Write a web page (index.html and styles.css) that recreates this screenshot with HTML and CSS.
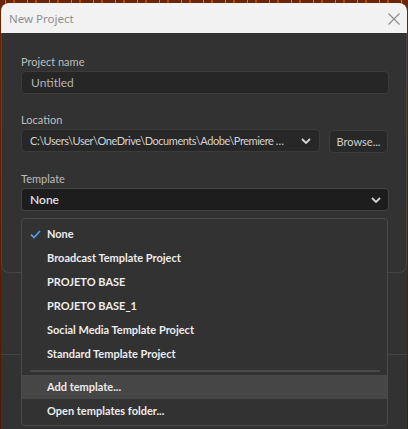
FILE: index.html
```html
<!DOCTYPE html>
<html lang="en">
<head>
<meta charset="utf-8">
<title>New Project</title>
<link rel="stylesheet" href="styles.css">
</head>
<body>
<div class="window">
  <div class="titlebar">
    <span class="title">New Project</span>
    <svg class="close" width="12" height="12" viewBox="0 0 12 12"><path d="M0.5 0.5L11.5 11.5M11.5 0.5L0.5 11.5" stroke="#8a8a8a" stroke-width="1.1" fill="none"/></svg>
  </div>
  <div class="body">
    <div class="panel">
      <div class="field">
        <label class="label">Project name</label>
        <div class="input">Untitled</div>
      </div>
      <div class="field">
        <label class="label">Location</label>
        <div class="row">
          <div class="select loc">
            <span class="value">C:\Users\User\OneDrive\Documents\Adobe\Premiere Pro\25.0</span>
            <svg class="chev" width="10" height="6" viewBox="0 0 10 6"><path d="M1 1L5 5L9 1" stroke="#d4d4d4" stroke-width="1.8" fill="none"/></svg>
          </div>
          <div class="button">Browse...</div>
        </div>
      </div>
      <div class="field">
        <label class="label">Template</label>
        <div class="select tpl">
          <span class="value">None</span>
          <svg class="chev" width="10" height="6" viewBox="0 0 10 6"><path d="M1 1L5 5L9 1" stroke="#d4d4d4" stroke-width="1.8" fill="none"/></svg>
        </div>
      </div>
    </div>
    <div class="footer"></div>
  </div>
  <ul class="menu">
    <li class="item checked"><svg class="check" width="11" height="9" viewBox="0 0 11 9"><path d="M1 4.6L4 7.6L10 1" stroke="#4d9df0" stroke-width="1.7" fill="none"/></svg>None</li>
    <li class="item">Broadcast Template Project</li>
    <li class="item">PROJETO BASE</li>
    <li class="item">PROJETO BASE_1</li>
    <li class="item">Social Media Template Project</li>
    <li class="item">Standard Template Project</li>
    <li class="divider"></li>
    <li class="item hover">Add template...</li>
    <li class="item">Open templates folder...</li>
  </ul>
</div>
</body>
</html>
```

FILE: styles.css
```css
* { box-sizing: border-box; }

html, body { height: 100%; }

body {
  margin: 0;
  overflow: hidden;
  background-color: #5a1f04;
  background-image:
    repeating-linear-gradient(90deg, transparent 0 5px, #e07a10 5px 6px, transparent 6px 13px, #b24a06 13px 15px, transparent 15px 22px),
    linear-gradient(#6a2606, #4a1a04);
  font-family: Lato, "Liberation Sans", sans-serif;
}

.window {
  position: relative;
  margin: 3px 0 0 1px;
  width: 406px;
  height: 426px;
  background: #323232;
  border-radius: 8px 8px 0 0;
  overflow: hidden;
}

.titlebar {
  height: 30px;
  background: #f2f2f2;
  display: flex;
  align-items: center;
  justify-content: space-between;
  padding: 0 7px 0 8px;
}

.title {
  font-family: "Noto Sans", "Open Sans", sans-serif;
  font-size: 11.5px;
  color: #8e8e8e;
}

.close { margin-top: 1px; }

.body {
  background: #323232;
}

.panel {
  border: 1px solid #454545;
  border-top: none;
  border-radius: 0 0 8px 8px;
  padding: 21px 17px 61px 19px;
  display: flex;
  flex-direction: column;
  gap: 18px;
}

.field {
  display: flex;
  flex-direction: column;
  gap: 1px;
}

.label {
  font-size: 11px;
  line-height: 16px;
  color: #bdbdbd;
}

.input, .select, .button {
  height: 23px;
  border: 1px solid #3b3b3b;
  border-radius: 4px;
  display: flex;
  align-items: center;
}

.input {
  background: #262626;
  padding-left: 9px;
  font-size: 12px;
  color: #b3b3b3;
}

.row {
  display: flex;
  gap: 9px;
}

.select {
  justify-content: space-between;
  padding: 0 8px 0 8px;
}

.select .value {
  white-space: nowrap;
  overflow: hidden;
  text-overflow: ellipsis;
}

.loc {
  width: 299px;
  flex: none;
  background: #272727;
  font-size: 11px;
  letter-spacing: -0.45px;
  color: #d2d2d2;
}

.loc .value { width: 257px; }

.tpl {
  background: #1d1d1d;
  border-color: #444;
  font-size: 12px;
  color: #e2e2e2;
  font-weight: 600;
  padding-right: 7px;
}

.button {
  margin-top: 1px;
  width: 59px;
  flex: none;
  justify-content: center;
  background: #282828;
  border-color: #3d3d3d;
  font-size: 11px;
  color: #cfcfcf;
}

.footer {
  margin-top: 81px;
  height: 1px;
  background: #434343;
}

.menu {
  position: absolute;
  top: 215px;
  left: 20px;
  width: 367px;
  margin: 0;
  padding: 3px 0 2px;
  list-style: none;
  background: #323232;
  border: 1px solid #4a4a4a;
  border-radius: 4px;
}

.item {
  position: relative;
  height: 24px;
  line-height: 24px;
  padding-left: 25px;
  font-size: 11px;
  font-weight: 700;
  color: #ececec;
}

.item.hover { background: #464646; }

.check {
  position: absolute;
  left: 8px;
  top: 8px;
}

.divider {
  height: 2px;
  margin: 4px 7px 3px 8px;
  background: #4a4a4a;
}
```
